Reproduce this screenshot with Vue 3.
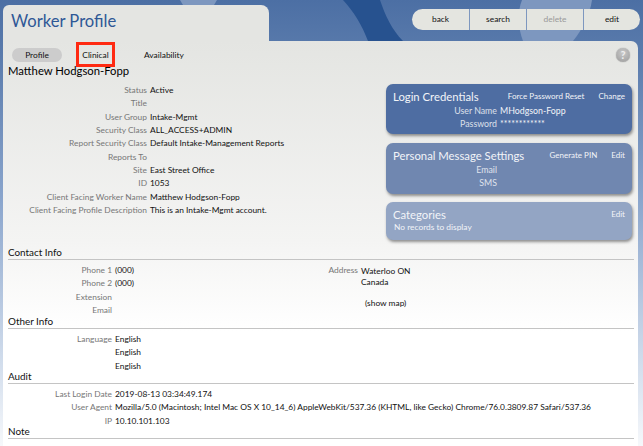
<script setup>
const main = [
  ['Status', 'Active'], ['Title', ''], ['User Group', 'Intake-Mgmt'], ['Security Class', 'ALL_ACCESS+ADMIN'],
  ['Report Security Class', 'Default Intake-Management Reports'], ['Reports To', ''], ['Site', 'East Street Office'],
  ['ID', '1053'], ['Client Facing Worker Name', 'Matthew Hodgson-Fopp'],
  ['Client Facing Profile Description', 'This is an Intake-Mgmt account.'],
]
const contact = [['Phone 1', '(000)'], ['Phone 2', '(000)'], ['Extension', ''], ['Email', '']]
const other = [['Language', 'English'], ['', 'English'], ['', 'English']]
const audit = [
  ['Last Login Date', '2019-08-13 03:34:49.174'],
  ['User Agent', 'Mozilla/5.0 (Macintosh; Intel Mac OS X 10_14_6) AppleWebKit/537.36 (KHTML, like Gecko) Chrome/76.0.3809.87 Safari/537.36'],
  ['IP', '10.10.101.103'],
]
const buttons = ['back', 'search', 'delete', 'edit']
</script>

<template>
  <div class="page">
    <svg class="bg" width="643" height="446" viewBox="0 0 643 446">
      <defs>
        <linearGradient id="fade" x1="0" y1="0" x2="0" y2="1">
          <stop offset="0" stop-color="#4c6fa4" />
          <stop offset="0.12" stop-color="#5a7bac" />
          <stop offset="0.45" stop-color="#8ba6cd" />
          <stop offset="0.8" stop-color="#cfdbeb" />
          <stop offset="1" stop-color="#f6f8fb" />
        </linearGradient>
      </defs>
      <rect width="643" height="446" fill="url(#fade)" />
      <path d="M343 0 H380 C385 15 392 30 403 41 H368 C362 25 354 12 343 0 Z" fill="#27528f" />
      <path d="M522 0 H592 C590 15 582 30 573 41 H523 C518 28 517 12 522 0 Z" fill="#7d97bf" />
      <path d="M180 0 H217 L214 5 H183 Z" fill="#7d97bf" />
    </svg>

    <div class="top">
      <div class="title-tab"><h1>Worker Profile</h1></div>
      <div class="actions">
        <span v-for="b in buttons" :key="b" class="act" :class="{ off: b === 'delete' }">{{ b }}</span>
      </div>
    </div>

    <div class="panel">
      <div class="tabs">
        <span class="tab pill">Profile</span>
        <span class="tab marked">Clinical</span>
        <span class="tab avail">Availability</span>
        <span class="help">?</span>
      </div>
      <div class="name">Matthew Hodgson-Fopp</div>

      <div class="summary">
        <div class="fields main-fields">
          <template v-for="r in main" :key="r[0]">
            <span class="lab">{{ r[0] }}</span><span class="val">{{ r[1] }}</span>
          </template>
        </div>
        <div class="cards">
          <div class="card c1">
            <div class="card-head">
              <span class="card-title">Login Credentials</span>
              <span class="link">Force Password Reset</span>
              <span class="link">Change</span>
            </div>
            <div class="cred"><span class="cl">User Name</span><span class="cv">MHodgson-Fopp</span></div>
            <div class="cred"><span class="cl">Password</span><span class="cv">************</span></div>
          </div>
          <div class="card c2">
            <div class="card-head">
              <span class="card-title">Personal Message Settings</span>
              <span class="link">Generate PIN</span>
              <span class="link">Edit</span>
            </div>
            <div class="cred"><span class="cl">Email</span></div>
            <div class="cred"><span class="cl">SMS</span></div>
          </div>
          <div class="card c3">
            <div class="card-head">
              <span class="card-title">Categories</span>
              <span class="link">Edit</span>
            </div>
            <div class="none">No records to display</div>
          </div>
        </div>
      </div>

      <h2 class="sec">Contact Info</h2>
      <div class="contact">
        <div class="fields low">
          <template v-for="r in contact" :key="r[0]">
            <span class="lab">{{ r[0] }}</span><span class="val">{{ r[1] }}</span>
          </template>
        </div>
        <div class="address">
          <span class="lab addr-l">Address</span>
          <div class="val addr-v">
            <div>Waterloo ON</div>
            <div>Canada</div>
            <div class="map">(show map)</div>
          </div>
        </div>
      </div>

      <h2 class="sec">Other Info</h2>
      <div class="fields low block">
        <template v-for="(r, i) in other" :key="i">
          <span class="lab">{{ r[0] }}</span><span class="val">{{ r[1] }}</span>
        </template>
      </div>

      <h2 class="sec">Audit</h2>
      <div class="fields low block">
        <template v-for="r in audit" :key="r[0]">
          <span class="lab">{{ r[0] }}</span><span class="val">{{ r[1] }}</span>
        </template>
      </div>

      <h2 class="sec">Note</h2>
    </div>
  </div>
</template>

<style>
html, body { margin: 0; padding: 0; overflow: hidden; }
</style>

<style scoped>
.page {
  position: relative;
  width: 643px;
  height: 446px;
  overflow: hidden;
  font-family: Lato, "Liberation Sans", sans-serif;
  font-size: 8.4px;
  line-height: 13.33px;
  color: #111;
}
.bg { position: absolute; left: 0; top: 0; }
.top {
  position: relative;
  display: flex;
  justify-content: space-between;
  align-items: flex-start;
  height: 41px;
  padding: 0 3px;
  box-sizing: border-box;
}
.title-tab {
  width: 266px;
  height: 36px;
  margin-top: 5px;
  background: #e4e5e2;
  border-radius: 6px 8px 0 0;
  box-sizing: border-box;
  padding-left: 8px;
}
h1 {
  margin: 0;
  font-size: 16.6px;
  line-height: 33px;
  font-weight: 400;
  color: #2f5896;
}
.actions {
  display: flex;
  margin-top: 9px;
  height: 21px;
  background: #e4e5e0;
  border-radius: 11px;
}
.act {
  width: 57px;
  line-height: 20px;
  text-align: center;
  border-left: 1px solid #7d97bf;
  box-sizing: border-box;
  color: #111;
}
.act:first-child { border-left: 0; }
.off { color: #999; }
.panel {
  position: relative;
  margin: 0 5px 0 3px;
  height: 405px;
  padding: 0 4px 0 5px;
  box-sizing: border-box;
  border-top-right-radius: 7px;
  background: linear-gradient(#e4e5e2 0, #f4f4f3 200px, #fff 290px);
}
.tabs {
  display: flex;
  align-items: center;
  height: 26px;
  position: relative;
}
.tab { text-align: center; line-height: 14px; }
.pill {
  width: 50px;
  margin-left: 4px;
  background: #cccccc;
  border-radius: 7px;
  margin-top: 1px;
}
.marked {
  width: 39px;
  height: 25px;
  line-height: 20px;
  margin-left: 14px;
  border: 3px solid #ff2a12;
  box-sizing: border-box;
}
.avail { margin-left: 29px; margin-top: 1px; }
.help {
  position: absolute;
  right: 4px;
  top: 7px;
  width: 14px;
  height: 14px;
  border-radius: 50%;
  background: radial-gradient(circle at 50% 35%, #c9c9c9, #9a9a9a);
  box-shadow: 0 0 1px #777;
  color: #eee;
  font-size: 11px;
  font-weight: 700;
  line-height: 14px;
  text-align: center;
}
.name {
  font-size: 11.3px;
  line-height: 14px;
  margin-top: -3px;
  height: 14px;
  color: #000;
}
.summary {
  display: flex;
  justify-content: space-between;
  align-items: flex-start;
  height: 163px;
  margin-top: 5px;
}
.fields {
  display: grid;
  column-gap: 3px;
  grid-auto-rows: 13.33px;
  white-space: nowrap;
}
.main-fields { grid-template-columns: 139px auto; padding-top: 1px; }
.low { grid-template-columns: 104px auto; }
.lab { text-align: right; color: #777; }
.val { color: #111; }
.cards {
  width: 246px;
  margin-right: 2px;
  margin-top: 1px;
  display: flex;
  flex-direction: column;
  gap: 9px;
}
.card {
  border-radius: 7px;
  color: #f2f4f8;
  padding: 5px 7px 0;
  box-sizing: border-box;
  box-shadow: 1px 2px 3px rgba(60, 60, 60, 0.55);
}
.c1 { background: #4e6da2; height: 50px; }
.c2 { background: #7087b0; height: 51px; margin-bottom: -1px; }
.c3 { background: #93a5c4; height: 38px; }
.card-head { display: flex; align-items: center; height: 15px; white-space: nowrap; }
.card-title { font-size: 11.3px; margin-right: auto; }
.link { margin-left: 14px; font-size: 8px; margin-top: 1px; }
.cred { display: flex; height: 13.33px; font-size: 8.8px; }
.cl { width: 104px; text-align: right; opacity: 0.85; }
.cv { margin-left: 3px; }
.none { margin-left: 1px; margin-top: -1px; }
.sec {
  margin: 0;
  font-size: 9.9px;
  font-weight: 400;
  line-height: 12px;
  color: #111;
  border-bottom: 1px solid #c4c4c4;
  height: 14px;
  box-sizing: border-box;
}
.contact { display: flex; height: 55px; padding-top: 4px; box-sizing: border-box; }
.block { height: 41px; padding-top: 4px; box-sizing: border-box; }
.contact .fields { width: 218px; }
.address { display: flex; }
.addr-l { width: 132px; }
.addr-v { margin-left: 3px; line-height: 11px; padding-top: 2px; }
.map { margin-top: 10px; padding-left: 4px; }
</style>
